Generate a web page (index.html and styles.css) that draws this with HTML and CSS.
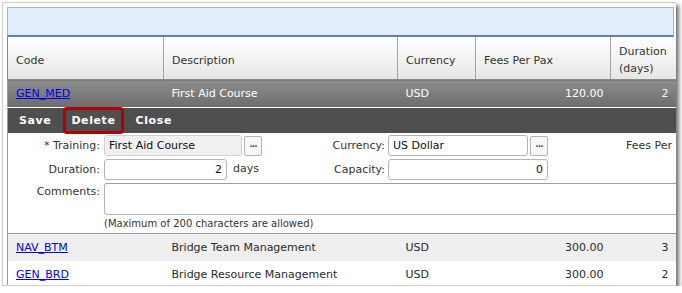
FILE: index.html
```html
<!DOCTYPE html>
<html>
<head>
<meta charset="utf-8">
<link rel="stylesheet" href="styles.css">
</head>
<body>
<div class="frame">
  <div class="bluebar"></div>
  <table class="grid">
    <colgroup>
      <col class="c-code"><col class="c-desc"><col class="c-cur"><col class="c-fee"><col class="c-dur">
    </colgroup>
    <thead>
      <tr class="head">
        <th>Code</th><th>Description</th><th>Currency</th><th>Fees Per Pax</th><th>Duration<br>(days)</th>
      </tr>
    </thead>
    <tbody>
      <tr class="row selected">
        <td><a href="#">GEN_MED</a></td><td>First Aid Course</td><td>USD</td><td class="num">120.00</td><td class="num">2</td>
      </tr>
      <tr class="editrow">
        <td colspan="5" class="editcell">
          <div class="toolbar">
            <span class="tbtn">Save</span>
            <span class="tbtn focus">Delete</span>
            <span class="tbtn">Close</span>
          </div>
          <div class="form">
            <div class="frow">
              <label class="lbl">* Training:</label>
              <div class="fld w158">
                <span class="inp ro w139">First Aid Course</span>
                <span class="dots">&middot;&middot;&middot;</span>
              </div>
              <label class="lbl w126">Currency:</label>
              <div class="fld w160">
                <span class="inp w140">US Dollar</span>
                <span class="dots">&middot;&middot;&middot;</span>
              </div>
              <label class="lbl3">Fees Per Pax:</label>
            </div>
            <div class="frow">
              <label class="lbl">Duration:</label>
              <div class="fld w158">
                <span class="inp w123 right">2</span>
                <span class="unit">days</span>
              </div>
              <label class="lbl w126">Capacity:</label>
              <div class="fld w160">
                <span class="inp w160 right">0</span>
              </div>
            </div>
            <div class="frow crow">
              <label class="lbl top">Comments:</label>
              <span class="textarea"></span>
            </div>
            <div class="note">(Maximum of 200 characters are allowed)</div>
          </div>
        </td>
      </tr>
      <tr class="row alt">
        <td><a href="#">NAV_BTM</a></td><td>Bridge Team Management</td><td>USD</td><td class="num">300.00</td><td class="num">3</td>
      </tr>
      <tr class="row">
        <td><a href="#">GEN_BRD</a></td><td>Bridge Resource Management</td><td>USD</td><td class="num">300.00</td><td class="num">2</td>
      </tr>
    </tbody>
  </table>
</div>
</body>
</html>
```
FILE: styles.css
```css
html, body {
  margin: 0;
  padding: 0;
  background: #ffffff;
}
body {
  font-family: "DejaVu Sans", Verdana, sans-serif;
  font-size: 11px;
  color: #2a2a2a;
}
.frame {
  box-sizing: border-box;
  margin: 2px 0 0 2px;
  width: 674px;
  height: 284px;
  border: 1px solid #cfcfcf;
  border-right: none;
  padding: 4px 0 0 4px;
  overflow: hidden;
  box-shadow: 3px 3px 4px rgba(0, 0, 0, 0.55);
  background: #fff;
}
.bluebar {
  box-sizing: border-box;
  width: 667px;
  height: 30px;
  background: #e2edfd;
  border: 1px solid #9db4de;
  border-bottom: 2px solid #5d7ec0;
}
.grid {
  table-layout: fixed;
  border-collapse: collapse;
  width: 668px;
  border-left: 1px solid #9a9a9a;
}
.c-code { width: 156px; }
.c-desc { width: 234px; }
.c-cur { width: 78px; }
.c-fee { width: 135px; }
.c-dur { width: 65px; }
.head th {
  height: 38px;
  padding: 4px 8px 0;
  text-align: left;
  font-weight: normal;
  color: #333;
  background: linear-gradient(#ffffff, #e6e6e6);
  border-left: 1px solid #a3a3a3;
  border-bottom: 1px solid #8a8a8a;
  line-height: 17px;
  white-space: nowrap;
  overflow: hidden;
}
.head th:first-child {
  border-left: 1px solid #8a8a8a;
}
.row td {
  height: 26px;
  padding: 0 8px;
  white-space: nowrap;
  overflow: hidden;
}
.row td.num {
  text-align: right;
  padding-right: 7px;
}
.row a {
  color: #0000ee;
  text-decoration: underline;
}
.selected td {
  height: 27px;
  background: linear-gradient(#8d8d8d, #6c6c6c);
  color: #ffffff;
  border-bottom: 1px solid #ffffff;
}
.alt td {
  height: 27px;
  background: #efefef;
}
.editcell {
  padding: 0;
  border-bottom: 1px solid #9a9a9a;
}
.toolbar {
  display: flex;
  align-items: center;
  gap: 10px;
  height: 25px;
  padding-left: 9px;
  background: #4f4f4f;
}
.tbtn {
  color: #ffffff;
  font-weight: bold;
  font-size: 11px;
  letter-spacing: 0.6px;
  padding: 0 2px;
}
.focus {
  box-sizing: border-box;
  height: 27px;
  margin: -1px 0;
  padding: 0 5px;
  display: flex;
  align-items: center;
  border: 3px solid #b50000;
  border-radius: 4px;
}
.form {
  padding-top: 2px;
  width: 700px;
  overflow: hidden;
}
.frow {
  display: flex;
  align-items: center;
  height: 21px;
  margin-bottom: 3px;
}
.lbl {
  box-sizing: border-box;
  width: 96px;
  flex: none;
  text-align: right;
  padding-right: 4px;
  color: #333;
}
.lbl.w126 { width: 126px; padding-right: 3px; }
.lbl3 {
  padding-left: 78px;
  white-space: nowrap;
  color: #333;
}
.fld {
  display: flex;
  align-items: center;
  flex: none;
}
.w158 { width: 158px; }
.w160 { width: 160px; }
.inp {
  box-sizing: border-box;
  display: flex;
  align-items: center;
  height: 21px;
  padding: 0 4px;
  border: 1px solid #b4b4b4;
  border-radius: 3px;
  background: #fff;
  color: #111;
  font-size: 11px;
}
.inp.right { justify-content: flex-end; }
.inp.ro { background: #f0f0f0; border-color: #d2d2d2; }
.w139 { width: 139px; }
.w140 { width: 140px; }
.w123 { width: 123px; }
.inp.w160 { width: 160px; }
.dots {
  box-sizing: border-box;
  width: 18px;
  height: 20px;
  margin-left: 2px;
  border: 1px solid #b4b4b4;
  border-radius: 2px;
  background: #f7f7f7;
  color: #555;
  font-weight: bold;
  font-size: 9px;
  letter-spacing: -1px;
  display: flex;
  align-items: center;
  justify-content: center;
}
.unit {
  margin-left: 6px;
  margin-top: -3px;
  color: #333;
}
.crow {
  height: 32px;
  align-items: flex-start;
  margin-bottom: 0;
}
.lbl.top { padding-top: 2px; }
.textarea {
  box-sizing: border-box;
  display: block;
  width: 600px;
  height: 32px;
  border: 1px solid #b4b4b4;
  border-top-color: #a0a0a0;
  border-radius: 3px;
}
.note {
  height: 18px;
  line-height: 18px;
  padding-left: 96px;
  color: #333;
  font-size: 10px;
}
```
